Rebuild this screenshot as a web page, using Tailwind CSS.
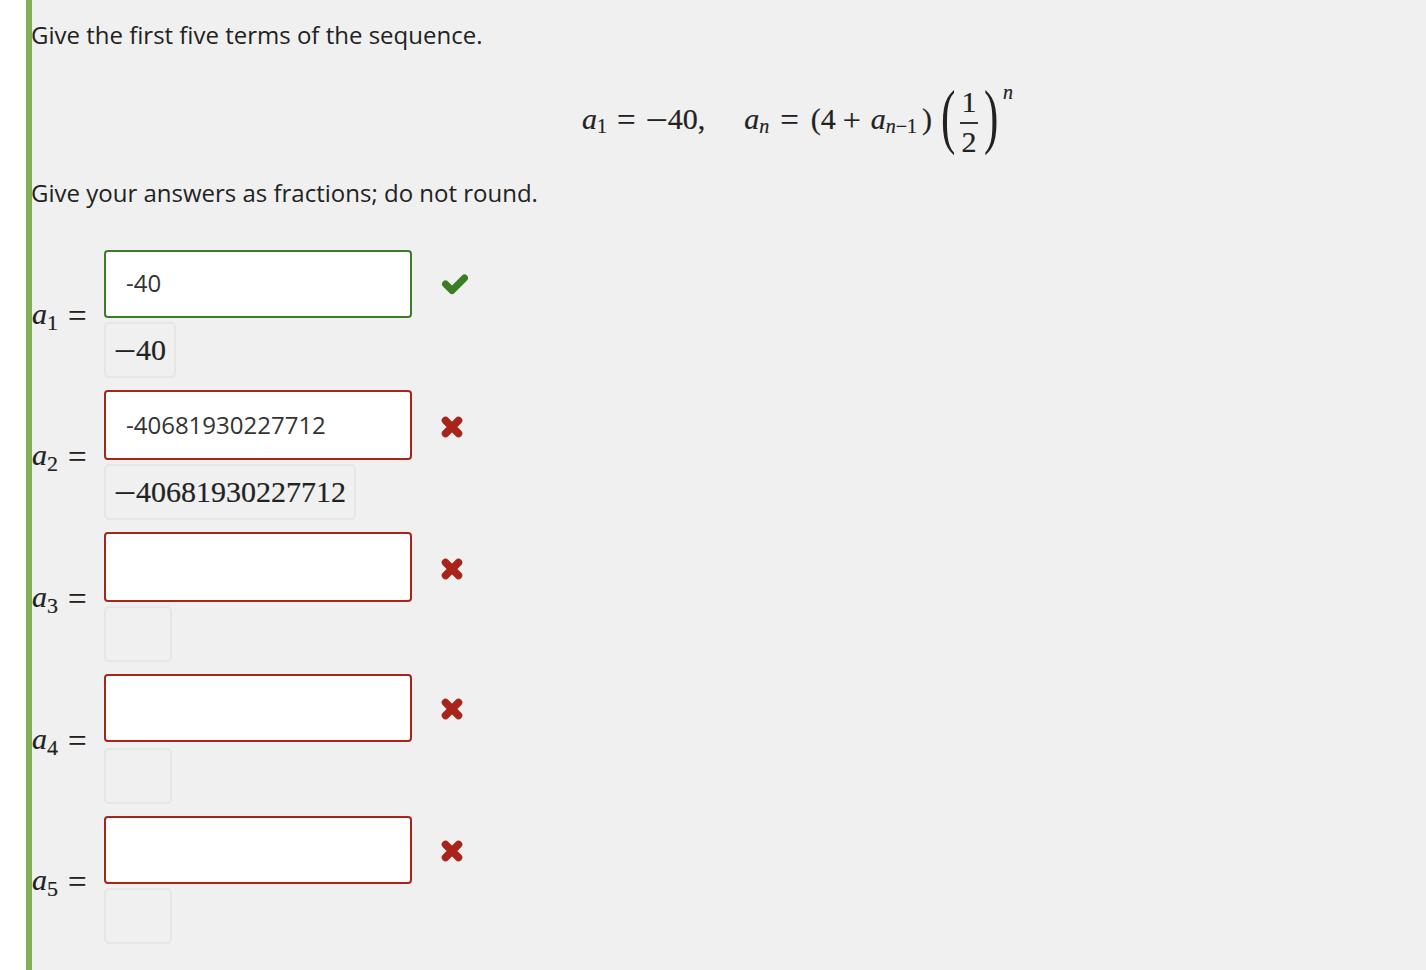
<!DOCTYPE html>
<html lang="en">
<head>
  <meta charset="UTF-8" />
  <title>Sequence question</title>
  <script src="https://cdn.jsdelivr.net/npm/@tailwindcss/browser@4"></script>
</head>
<body class="bg-white h-[970px] overflow-hidden font-['Open_Sans',sans-serif] text-[#222]">
  <main class="ml-[26px] h-[970px] border-l-[6px] border-[#82ae56] bg-[#f0f0f0]">
    <p class="-ml-px pt-[18px] text-[24px] leading-[33px] h-[52px]">Give the first five terms of the sequence.</p>

    <!-- recurrence -->
    <div class="h-[124px] pl-[550px] pt-[35px] font-['Liberation_Serif',serif] text-[30px] whitespace-nowrap [-webkit-text-stroke:0.2px]">
      <div class="flex items-center h-[70px]">
        <div class="flex items-baseline leading-[40px] mb-[8px]">
          <span><i>a</i><sub class="text-[20px] bottom-[-4px]">1</sub></span>
          <span class="ml-[10px] text-[33px] translate-y-[2px]">=</span>
          <span class="ml-[12px]"><span class="text-[36px] leading-none mr-[2px]">–</span>40,</span>
          <span class="ml-[39px]"><i>a</i><sub class="text-[20px] italic bottom-[-4px]">n</sub></span>
          <span class="ml-[11px] text-[33px] translate-y-[2px]">=</span>
          <span class="ml-[12px]">(4</span>
          <span class="ml-[7px] text-[32px] translate-y-[2px]">+</span>
          <span class="ml-[10px]"><i>a</i><sub class="text-[20px] bottom-[-4px]"><i>n</i>−1</sub></span>
          <span class="ml-[5px]">)</span>
        </div>
        <span class="ml-[9px] text-[72px] font-light leading-[52px] scale-x-[0.6] origin-left w-[14px] -mt-[13px] [-webkit-text-stroke:0px]">(</span>
        <span class="ml-[5px] flex flex-col items-center w-[18px] leading-[30px]">
          <span>1</span>
          <span class="w-[18px] h-[2px] bg-[#333] mt-[5px] mb-[3px]"></span>
          <span>2</span>
        </span>
        <span class="ml-[6px] text-[72px] font-light leading-[52px] scale-x-[0.6] origin-left w-[14px] -mt-[13px] [-webkit-text-stroke:0px]">)</span>
        <i class="text-[20px] self-start -mt-[7px] ml-[5px] leading-[24px]">n</i>
      </div>
    </div>

    <p class="-ml-px text-[24px] leading-[33px] h-[58px]">Give your answers as fractions; do not round.</p>

    <div class="flex flex-col gap-3 mt-[16px]">
      <!-- a1 -->
      <div class="flex items-center h-[128px]">
        <div class="w-[72px] mb-[2px] font-['Liberation_Serif',serif] text-[30px] leading-[40px] flex items-baseline [-webkit-text-stroke:0.2px]"><span><i>a</i><sub class="text-[22px] bottom-[-6px]">1</sub></span><span class="ml-[10px] text-[33px] translate-y-[3px]">=</span></div>
        <div>
          <div class="flex items-center">
            <input value="-40" class="w-[308px] h-[68px] bg-white border-2 border-[#3a7d24] rounded-[4px] pl-5 pb-[3px] text-[24px] text-[#333] outline-none" />
            <svg class="ml-[29px]" width="28" height="24" viewBox="0 0 28 24"><path d="M4.5 12 L11 18.5 L23.5 6" fill="none" stroke="#3a7d24" stroke-width="7" stroke-linejoin="round" stroke-linecap="round"/></svg>
          </div>
          <div class="mt-[4px] h-[56px] w-[72px] border-2 border-[#e6e6e6] rounded-[5px] pl-[10px] whitespace-nowrap font-['Liberation_Serif',serif] text-[30px] leading-[52px] [-webkit-text-stroke:0.2px]"><span class="text-[36px] leading-none mr-[2px]">–</span>40</div>
        </div>
      </div>
      <!-- a2 -->
      <div class="flex items-center h-[130px]">
        <div class="w-[72px] mb-[2px] font-['Liberation_Serif',serif] text-[30px] leading-[40px] flex items-baseline [-webkit-text-stroke:0.2px]"><span><i>a</i><sub class="text-[22px] bottom-[-6px]">2</sub></span><span class="ml-[10px] text-[33px] translate-y-[3px]">=</span></div>
        <div>
          <div class="flex items-center">
            <input value="-40681930227712" class="w-[308px] h-[70px] bg-white border-2 border-[#a8231a] rounded-[4px] pl-5 pb-[2px] text-[24px] text-[#333] outline-none" />
            <svg class="ml-[29px] mt-[4px]" width="22" height="22" viewBox="0 0 22 22"><path d="M4.5 4.5 L17.5 17.5 M17.5 4.5 L4.5 17.5" fill="none" stroke="#a8231a" stroke-width="7.5" stroke-linecap="round"/></svg>
          </div>
          <div class="mt-[4px] h-[56px] w-[252px] border-2 border-[#e6e6e6] rounded-[5px] pl-[10px] whitespace-nowrap font-['Liberation_Serif',serif] text-[30px] leading-[52px] [-webkit-text-stroke:0.2px]"><span class="text-[36px] leading-none mr-[2px]">–</span>40681930227712</div>
        </div>
      </div>
      <!-- a3 -->
      <div class="flex items-center h-[130px]">
        <div class="w-[72px] mb-[2px] font-['Liberation_Serif',serif] text-[30px] leading-[40px] flex items-baseline [-webkit-text-stroke:0.2px]"><span><i>a</i><sub class="text-[22px] bottom-[-6px]">3</sub></span><span class="ml-[10px] text-[33px] translate-y-[3px]">=</span></div>
        <div>
          <div class="flex items-center">
            <input class="w-[308px] h-[70px] bg-white border-2 border-[#a8231a] rounded-[4px] pl-5 text-[24px] outline-none" />
            <svg class="ml-[29px] mt-[4px]" width="22" height="22" viewBox="0 0 22 22"><path d="M4.5 4.5 L17.5 17.5 M17.5 4.5 L4.5 17.5" fill="none" stroke="#a8231a" stroke-width="7.5" stroke-linecap="round"/></svg>
          </div>
          <div class="mt-[4px] h-[56px] w-[68px] border-2 border-[#e6e6e6] rounded-[5px]"></div>
        </div>
      </div>
      <!-- a4 -->
      <div class="flex items-center h-[130px]">
        <div class="w-[72px] mb-[2px] font-['Liberation_Serif',serif] text-[30px] leading-[40px] flex items-baseline [-webkit-text-stroke:0.2px]"><span><i>a</i><sub class="text-[22px] bottom-[-6px]">4</sub></span><span class="ml-[10px] text-[33px] translate-y-[3px]">=</span></div>
        <div>
          <div class="flex items-center">
            <input class="w-[308px] h-[68px] bg-white border-2 border-[#a8231a] rounded-[4px] pl-5 text-[24px] outline-none" />
            <svg class="ml-[29px] mt-[2px]" width="22" height="22" viewBox="0 0 22 22"><path d="M4.5 4.5 L17.5 17.5 M17.5 4.5 L4.5 17.5" fill="none" stroke="#a8231a" stroke-width="7.5" stroke-linecap="round"/></svg>
          </div>
          <div class="mt-[6px] h-[56px] w-[68px] border-2 border-[#e6e6e6] rounded-[5px]"></div>
        </div>
      </div>
      <!-- a5 -->
      <div class="flex items-center h-[128px]">
        <div class="w-[72px] mb-[2px] font-['Liberation_Serif',serif] text-[30px] leading-[40px] flex items-baseline [-webkit-text-stroke:0.2px]"><span><i>a</i><sub class="text-[22px] bottom-[-6px]">5</sub></span><span class="ml-[10px] text-[33px] translate-y-[3px]">=</span></div>
        <div>
          <div class="flex items-center">
            <input class="w-[308px] h-[68px] bg-white border-2 border-[#a8231a] rounded-[4px] pl-5 text-[24px] outline-none" />
            <svg class="ml-[29px] mt-[2px]" width="22" height="22" viewBox="0 0 22 22"><path d="M4.5 4.5 L17.5 17.5 M17.5 4.5 L4.5 17.5" fill="none" stroke="#a8231a" stroke-width="7.5" stroke-linecap="round"/></svg>
          </div>
          <div class="mt-[4px] h-[56px] w-[68px] border-2 border-[#e6e6e6] rounded-[5px]"></div>
        </div>
      </div>
    </div>
  </main>
</body>
</html>
